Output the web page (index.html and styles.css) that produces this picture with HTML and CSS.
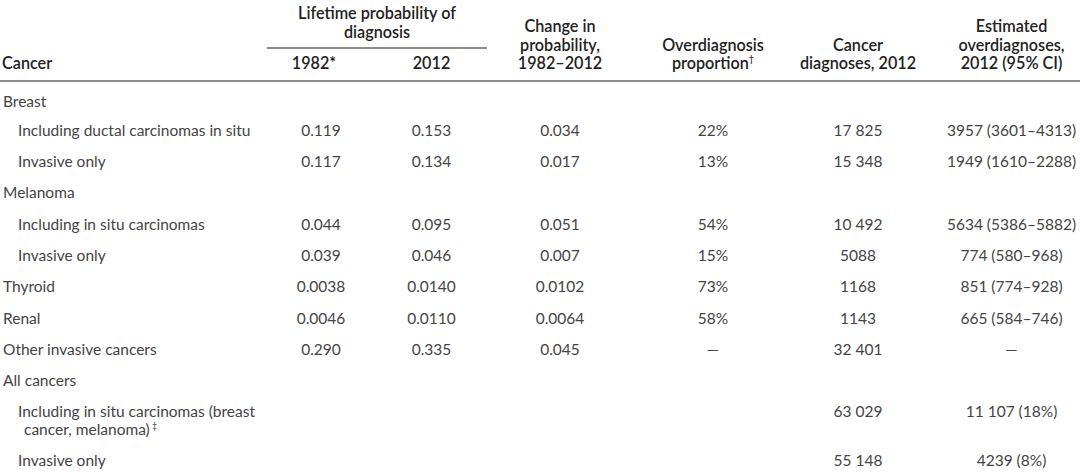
FILE: index.html
```html
<!DOCTYPE html>
<html lang="en">
<head>
<meta charset="utf-8">
<title>Overdiagnosis table</title>
<link rel="stylesheet" href="styles.css">
</head>
<body>
<table class="tbl">
  <colgroup>
    <col class="c1"><col class="c2"><col class="c3"><col class="c4"><col class="c5"><col class="c6"><col class="c7">
  </colgroup>
  <thead>
    <tr class="h-top">
      <th class="h-left" rowspan="2">Cancer</th>
      <th class="h-span" colspan="2"><span class="span-text">Lifetime probability of<br>diagnosis</span></th>
      <th rowspan="2">Change in<br>probability,<br>1982–2012</th>
      <th rowspan="2">Overdiagnosis<br>proportion<sup>†</sup></th>
      <th rowspan="2">Cancer<br>diagnoses, 2012</th>
      <th class="h-last" rowspan="2">Estimated<br>overdiagnoses,<br>2012 (95% CI)</th>
    </tr>
    <tr class="h-sub">
      <th class="h-1982">1982*</th>
      <th>2012</th>
    </tr>
  </thead>
  <tbody>
    <tr class="cat first"><td class="name">Breast</td><td></td><td></td><td></td><td></td><td></td><td class="last"></td></tr>
    <tr><td class="name sub">Including ductal carcinomas in situ</td><td>0.119</td><td>0.153</td><td>0.034</td><td>22%</td><td>17 825</td><td class="last">3957 (3601–4313)</td></tr>
    <tr><td class="name sub">Invasive only</td><td>0.117</td><td>0.134</td><td>0.017</td><td>13%</td><td>15 348</td><td class="last">1949 (1610–2288)</td></tr>
    <tr class="cat"><td class="name">Melanoma</td><td></td><td></td><td></td><td></td><td></td><td class="last"></td></tr>
    <tr><td class="name sub">Including in situ carcinomas</td><td>0.044</td><td>0.095</td><td>0.051</td><td>54%</td><td>10 492</td><td class="last">5634 (5386–5882)</td></tr>
    <tr><td class="name sub">Invasive only</td><td>0.039</td><td>0.046</td><td>0.007</td><td>15%</td><td>5088</td><td class="last">774 (580–968)</td></tr>
    <tr><td class="name">Thyroid</td><td>0.0038</td><td>0.0140</td><td>0.0102</td><td>73%</td><td>1168</td><td class="last">851 (774–928)</td></tr>
    <tr><td class="name">Renal</td><td>0.0046</td><td>0.0110</td><td>0.0064</td><td>58%</td><td>1143</td><td class="last">665 (584–746)</td></tr>
    <tr><td class="name">Other invasive cancers</td><td>0.290</td><td>0.335</td><td>0.045</td><td>—</td><td>32 401</td><td class="last">—</td></tr>
    <tr class="cat"><td class="name">All cancers</td><td></td><td></td><td></td><td></td><td></td><td class="last"></td></tr>
    <tr class="two"><td class="name sub">Including in situ carcinomas (breast<br><span class="cont">cancer, melanoma)<sup class="dag"> ‡</sup></span></td><td></td><td></td><td></td><td></td><td>63 029</td><td class="last">11 107 (18%)</td></tr>
    <tr><td class="name sub">Invasive only</td><td></td><td></td><td></td><td></td><td>55 148</td><td class="last">4239 (8%)</td></tr>
  </tbody>
</table>
</body>
</html>
```
FILE: styles.css
```css
html, body {
  margin: 0;
  padding: 0;
  background: #ffffff;
}
body {
  font-family: Lato, "Liberation Sans", sans-serif;
  font-size: 15.5px;
  color: #444444;
  width: 1080px;
  height: 472px;
  overflow: hidden;
}
.tbl {
  width: 1080px;
  border-collapse: separate;
  border-spacing: 0;
  table-layout: fixed;
}
.c1 { width: 266px; }
.c2 { width: 110px; }
.c3 { width: 111px; }
.c4 { width: 146px; }
.c5 { width: 160px; }
.c6 { width: 130px; }
.c7 { width: 157px; }

th {
  font-weight: 600;
  font-size: 16.2px;
  color: #222222;
  line-height: 18.5px;
  text-align: center;
  vertical-align: bottom;
  padding: 0;
}
thead tr.h-top th[rowspan] {
  padding: 0 0 7px 0;
  border-bottom: 2px solid #8c8c8c;
}
thead tr.h-top th.h-left {
  text-align: left;
  padding-left: 2px;
}
thead tr.h-top th.h-last {
  padding-left: 20px;
}
th.h-span {
  padding: 4px 0 0 0;
}
.span-text {
  display: block;
  padding-bottom: 6px;
  border-bottom: 2px solid #8c8c8c;
  margin: 0 0 0 1px;
}
.h-sub th {
  padding: 5px 0 7px 0;
  border-bottom: 2px solid #8c8c8c;
}
.h-sub th.h-1982 { padding-right: 14px; }
sup {
  font-size: 9px;
  line-height: 0;
  vertical-align: 7px;
}

td {
  text-align: center;
  line-height: 17.3px;
  padding: 7px 0;
  vertical-align: top;
  white-space: nowrap;
}
td.last { padding-left: 20px; }
td.name {
  text-align: left;
  padding-left: 3px;
}
td.sub { padding-left: 18px; }
tr.first td { padding-top: 11px; padding-bottom: 5px; }
.cont { padding-left: 6px; }
sup.dag { vertical-align: 6px; }
```
